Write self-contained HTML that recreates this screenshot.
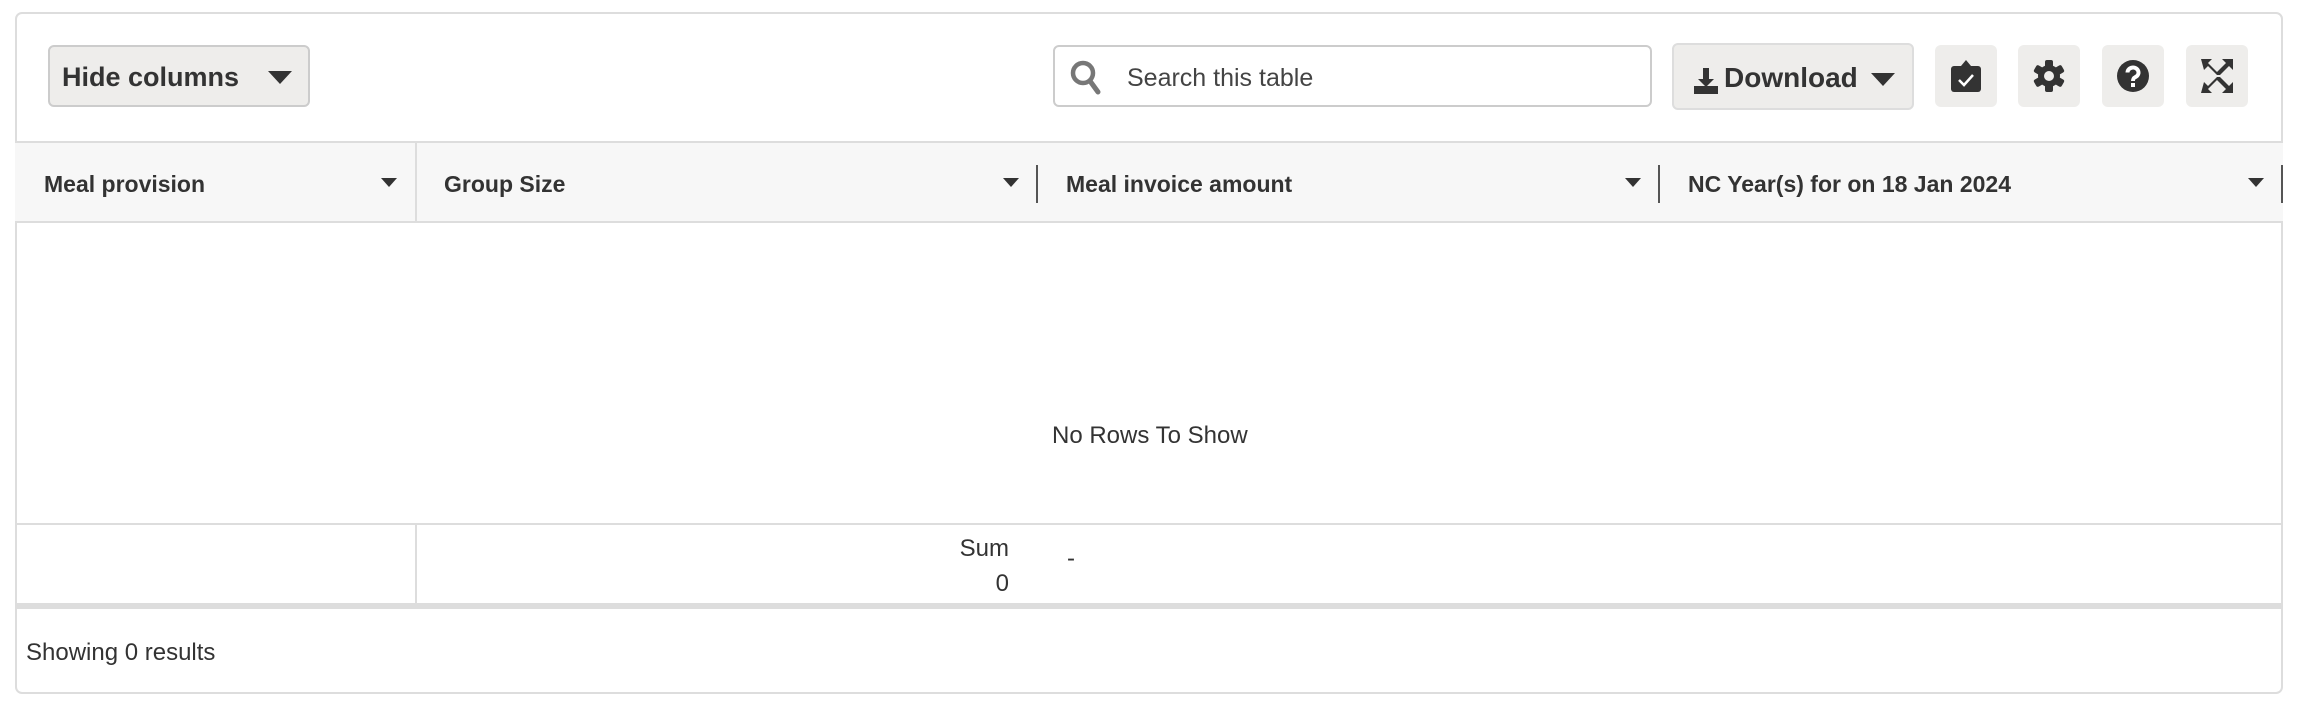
<!DOCTYPE html>
<html><head><style>
*{box-sizing:border-box;margin:0;padding:0}
body{width:2300px;height:706px;background:#fff;font-family:"Liberation Sans",sans-serif;color:#333;position:relative;overflow:hidden}
.card{position:absolute;left:15px;top:12px;width:2268px;height:682px;border:2px solid #ddd;border-radius:7px}
.abs{position:absolute}
.btn{position:absolute;background:#eeedeb;border:2px solid #ccc;border-radius:6px}
.ib{position:absolute;top:45px;width:62px;height:62px;background:#eeedeb;border-radius:6px;display:flex;align-items:center;justify-content:center}
.hd{position:absolute;top:141px;left:15px;width:2268px;height:82px;background:#f7f7f7;border-top:2px solid #ddd;border-bottom:2px solid #ddd}
.ht{position:absolute;top:28px;font-weight:bold;font-size:23px;color:#333}
.arr{position:absolute;top:35px;width:0;height:0;border-left:8px solid transparent;border-right:8px solid transparent;border-top:9px solid #333}
.sep{position:absolute;top:22px;width:2px;height:38px;background:#555}
</style></head><body>
<div class="card"></div>
<div class="btn" style="left:48px;top:45px;width:262px;height:62px"><span class="abs" style="left:12px;top:15px;font-size:27px;font-weight:bold">Hide columns</span><span class="abs" style="left:218px;top:24px;border-left:12px solid transparent;border-right:12px solid transparent;border-top:13px solid #333"></span></div>
<div class="abs" style="left:1053px;top:45px;width:599px;height:62px;border:2px solid #ccc;border-radius:6px;background:#fff">
<svg class="abs" style="left:14px;top:12px" width="34" height="36" viewBox="0 0 34 36"><circle cx="14" cy="14" r="10" fill="none" stroke="#777" stroke-width="4.5"/><line x1="21" y1="22" x2="29" y2="33" stroke="#777" stroke-width="5" stroke-linecap="round"/></svg>
<span class="abs" style="left:72px;top:17px;font-size:25px;color:#444">Search this table</span></div>
<div class="btn" style="left:1672px;top:43px;width:242px;height:67px;border-color:#ddd">
<svg class="abs" style="left:20px;top:23px" width="24" height="26" viewBox="0 0 24 26"><path d="M9 0h6v11h5l-8 8-8-8h5z" fill="#333"/><rect x="0" y="18" width="24" height="8" fill="#333"/></svg>
<span class="abs" style="left:50px;top:17px;font-size:28px;font-weight:bold">Download</span>
<span class="abs" style="left:197px;top:28px;border-left:12px solid transparent;border-right:12px solid transparent;border-top:13px solid #333"></span></div>
<div class="ib" style="left:1935px"><svg width="30" height="32" viewBox="0 0 30 32"><rect x="0" y="6" width="30" height="26" rx="3" fill="#333"/><path d="M10 6l5-6 5 6z" fill="#333"/><path d="M8 20l5 5 9-10" fill="none" stroke="#fff" stroke-width="2.5"/></svg></div>
<div class="ib" style="left:2018px"><svg width="32" height="32" viewBox="0 0 32 32"><g fill="#333"><circle cx="16" cy="16" r="11"/><rect x="12" y="0" width="8" height="32" rx="2"/><rect x="12" y="0" width="8" height="32" rx="2" transform="rotate(60 16 16)"/><rect x="12" y="0" width="8" height="32" rx="2" transform="rotate(120 16 16)"/></g><circle cx="16" cy="16" r="5" fill="#eeedeb"/></svg></div>
<div class="ib" style="left:2102px"><svg width="32" height="32" viewBox="0 0 32 32"><circle cx="16" cy="16" r="16" fill="#333"/><path d="M10.5 12.5a5.5 5 0 1 1 8 4.5c-2 1-2.5 2-2.5 4" fill="none" stroke="#fff" stroke-width="4"/><rect x="14" y="23" width="4" height="4" fill="#fff"/></svg></div>
<div class="ib" style="left:2186px"><svg width="32" height="34" viewBox="0 0 32 34"><g fill="#333"><path d="M0 0h11l-4 4 9 9 9-9-4-4h11v11l-4-4-9 9-3 0-9-9-4 4z"/><path d="M0 34h11l-4-4 9-9 9 9-4 4h11V23l-4 4-9-9h-3l-9 9-4-4z"/></g></svg></div>
<div class="hd">
<span class="ht" style="left:29px">Meal provision</span><span class="arr" style="left:366px"></span>
<div class="abs" style="left:400px;top:0;width:2px;height:80px;background:#ddd"></div>
<span class="ht" style="left:429px">Group Size</span><span class="arr" style="left:988px"></span><div class="sep" style="left:1021px"></div>
<span class="ht" style="left:1051px">Meal invoice amount</span><span class="arr" style="left:1610px"></span><div class="sep" style="left:1643px"></div>
<span class="ht" style="left:1673px">NC Year(s) for on 18 Jan 2024</span><span class="arr" style="left:2233px"></span><div class="sep" style="left:2266px"></div>
</div>
<span class="abs" style="left:1052px;top:422px;font-size:24px;color:#333">No Rows To Show</span>
<div class="abs" style="left:15px;top:523px;width:2268px;height:2px;background:#ddd"></div>
<div class="abs" style="left:415px;top:525px;width:2px;height:78px;background:#ddd"></div>
<span class="abs" style="left:900px;top:531px;width:109px;text-align:right;font-size:24px;line-height:35px">Sum<br>0</span>
<span class="abs" style="left:1067px;top:545px;font-size:24px">-</span>
<div class="abs" style="left:15px;top:603px;width:2268px;height:6px;background:#ddd"></div>
<span class="abs" style="left:26px;top:639px;font-size:24px">Showing 0 results</span>
</body></html>
